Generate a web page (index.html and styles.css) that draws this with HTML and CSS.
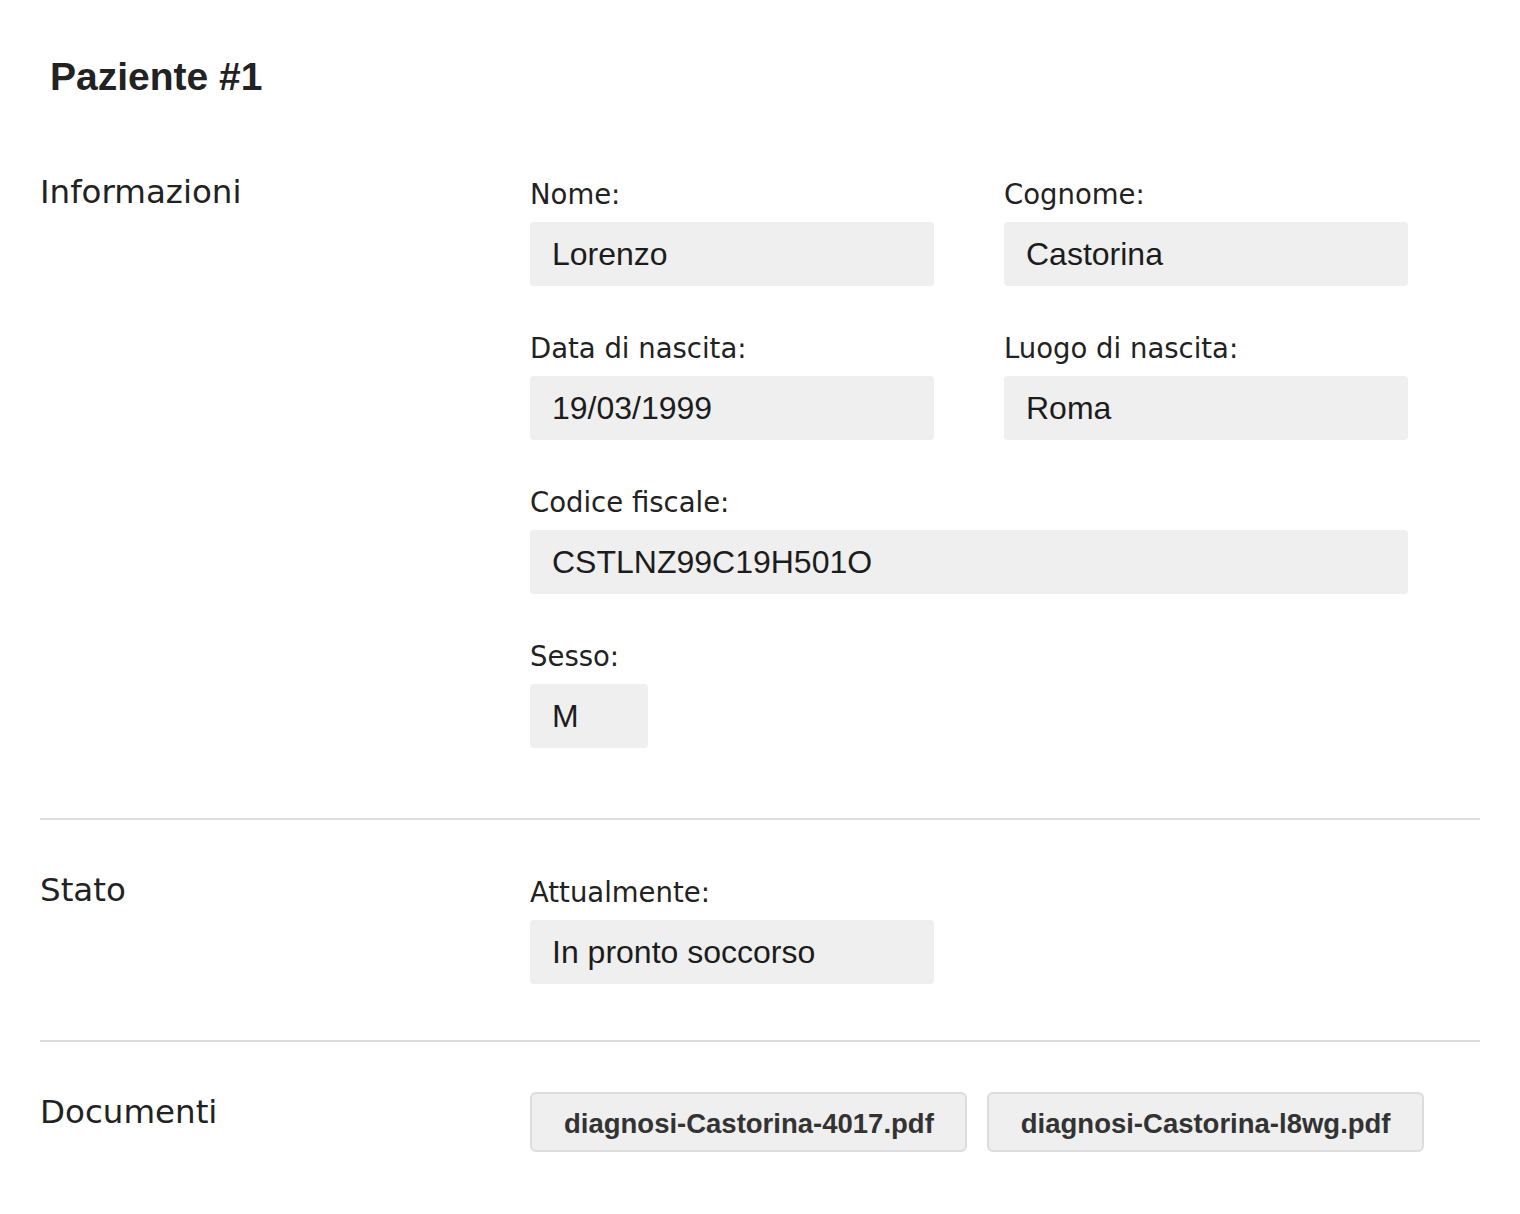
FILE: index.html
```html
<!DOCTYPE html>
<html lang="it">
<head>
<meta charset="utf-8">
<title>Paziente #1</title>
<link rel="stylesheet" href="styles.css">
</head>
<body>
<div class="page">
  <h1 class="title">Paziente #1</h1>

  <section class="section section-info">
    <h2 class="section-title">Informazioni</h2>
    <div class="fields">
      <div class="field">
        <div class="label">Nome:</div>
        <div class="value">Lorenzo</div>
      </div>
      <div class="field">
        <div class="label">Cognome:</div>
        <div class="value">Castorina</div>
      </div>
      <div class="field">
        <div class="label">Data di nascita:</div>
        <div class="value">19/03/1999</div>
      </div>
      <div class="field">
        <div class="label">Luogo di nascita:</div>
        <div class="value">Roma</div>
      </div>
      <div class="field field-wide">
        <div class="label">Codice fiscale:</div>
        <div class="value">CSTLNZ99C19H501O</div>
      </div>
      <div class="field field-wide">
        <div class="label">Sesso:</div>
        <div class="value value-small">M</div>
      </div>
    </div>
  </section>

  <section class="section section-state">
    <h2 class="section-title">Stato</h2>
    <div class="fields">
      <div class="field">
        <div class="label">Attualmente:</div>
        <div class="value">In pronto soccorso</div>
      </div>
    </div>
  </section>

  <section class="section section-docs">
    <h2 class="section-title section-title-docs">Documenti</h2>
    <div class="docs">
      <button class="doc">diagnosi-Castorina-4017.pdf</button>
      <button class="doc">diagnosi-Castorina-l8wg.pdf</button>
    </div>
  </section>
</div>
</body>
</html>
```

FILE: styles.css
```css
html, body {
  margin: 0;
  padding: 0;
  background: #ffffff;
  color: #222222;
}

.page {
  padding: 0 40px 40px;
}

.title {
  margin: 54px 0 23px;
  padding-left: 10px;
  font-family: "Liberation Sans", Arial, sans-serif;
  font-weight: bold;
  font-size: 39px;
  line-height: 45px;
  color: #222222;
}

.section {
  display: grid;
  grid-template-columns: 490px 1fr;
  align-items: start;
  border-top: 2px solid #dddddd;
}

.section-info {
  border-top: none;
  padding: 56px 0 70px;
}

.section-state {
  padding: 56px 0 56px;
}

.section-docs {
  padding: 50px 0 40px;
}

.section-title {
  margin: 0;
  font-family: "DejaVu Sans", sans-serif;
  font-weight: normal;
  font-size: 32.5px;
  line-height: 28px;
  color: #222222;
}

.section-title-docs {
  margin-top: 6px;
}

.fields {
  display: grid;
  grid-template-columns: 404px 404px;
  column-gap: 70px;
  row-gap: 46px;
}

.field-wide {
  grid-column: 1 / 3;
}

.label {
  font-family: "DejaVu Sans", sans-serif;
  font-size: 27.5px;
  line-height: 32px;
  margin-bottom: 12px;
  color: #222222;
}

.value {
  height: 64px;
  box-sizing: border-box;
  padding-left: 22px;
  background: #efefef;
  border-radius: 4px;
  font-family: "Liberation Sans", Arial, sans-serif;
  font-size: 32px;
  line-height: 64px;
  color: #1c1c1c;
}

.value-small {
  width: 118px;
}

.docs {
  display: flex;
  gap: 20px;
}

.doc {
  margin: 0;
  height: 60px;
  box-sizing: border-box;
  padding: 3px 31px 0 32px;
  background: #efefef;
  border: 2px solid #dcdcdc;
  border-radius: 6px;
  font-family: "Liberation Sans", Arial, sans-serif;
  font-weight: bold;
  font-size: 27.5px;
  line-height: 53px;
  color: #333333;
  cursor: pointer;
}
```
